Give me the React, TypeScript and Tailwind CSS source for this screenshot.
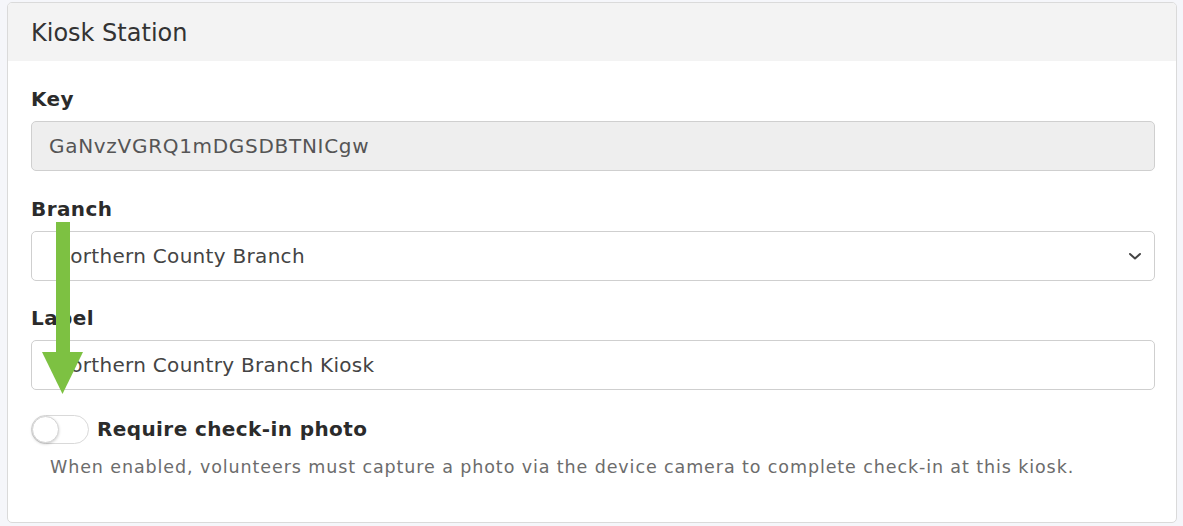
import React, { useState } from 'react';

const font = { fontFamily: '"DejaVu Sans", Verdana, sans-serif' };

function Field({ label, gap = 'mb-5', children }: { label: string; gap?: string; children: React.ReactNode }) {
  return (
    <div className={gap}>
      <label className="block pt-[3px] mb-[7px] text-[20px] leading-[30px] font-bold tracking-[0.4px] text-[#2b2b2b]">{label}</label>
      {children}
    </div>
  );
}

export default function App() {
  const [photo, setPhoto] = useState(false);

  return (
    <div className="relative min-h-[526px] bg-[#f5f6fa] pt-[2px] pl-[7px]" style={font}>
      <div className="w-[1170px] rounded-[5px] border border-[#dadada] bg-white overflow-hidden">
        <div className="h-[58px] bg-[#f3f3f3] px-[23px] pt-[2px] flex items-center">
          <h2 className="text-[24px] text-[#333] leading-none">Kiosk Station</h2>
        </div>

        <div className="pl-[23px] pr-[21px] pt-[20px] pb-[42px]">
          <Field label="Key">
            <div className="h-[50px] rounded-[5px] border border-[#cfcfcf] bg-[#eeeeee] px-[17px] flex items-center text-[20px] tracking-[0.7px] text-[#555]">
              GaNvzVGRQ1mDGSDBTNICgw
            </div>
          </Field>

          <Field label="Branch" gap="mb-[19px]">
            <div className="h-[50px] rounded-[5px] border border-[#cfcfcf] bg-white pl-[23px] pr-[12px] flex items-center justify-between text-[20px] tracking-[0.3px] text-[#444]">
              <span>Northern County Branch</span>
              <svg width="14" height="10" viewBox="0 0 14 10" fill="none">
                <path d="M2 3l5 4.5L12 3" stroke="#444" strokeWidth="2" strokeLinecap="round" strokeLinejoin="round" />
              </svg>
            </div>
          </Field>

          <Field label="Label" gap="mb-[24px]">
            <div className="h-[50px] rounded-[5px] border border-[#cfcfcf] bg-white pl-[23px] pr-[17px] flex items-center text-[20px] tracking-[0.3px] text-[#444]">
              Northern Country Branch Kiosk
            </div>
          </Field>

          <div className="flex items-center gap-[8px]">
            <button
              onClick={() => setPhoto(!photo)}
              className={`relative w-[58px] h-[29px] rounded-full border ${photo ? 'bg-[#7dc142] border-[#7dc142]' : 'bg-white border-[#d9d9d9]'}`}
            >
              <span
                className={`absolute top-[0px] w-[27px] h-[27px] rounded-full bg-white border border-[#d4d4d4] shadow-[0_1px_3px_rgba(0,0,0,0.2)] ${photo ? 'left-[29px]' : 'left-[0px]'}`}
              />
            </button>
            <span className="text-[20px] font-bold tracking-[0.4px] text-[#2b2b2b] leading-[30px]">Require check-in photo</span>
          </div>
          <p className="mt-[10px] pl-[19px] text-[17.5px] leading-[26px] tracking-[0.9px] text-[#6c6c6c]">
            When enabled, volunteers must capture a photo via the device camera to complete check-in at this kiosk.
          </p>
        </div>
      </div>

      <svg className="absolute left-0 top-0 pointer-events-none" width="100" height="400" viewBox="0 0 100 400">
        <rect x="56" y="222" width="14" height="132" fill="#7dc142" />
        <polygon points="42,352 83,352 62.5,394" fill="#7dc142" />
      </svg>
    </div>
  );
}
